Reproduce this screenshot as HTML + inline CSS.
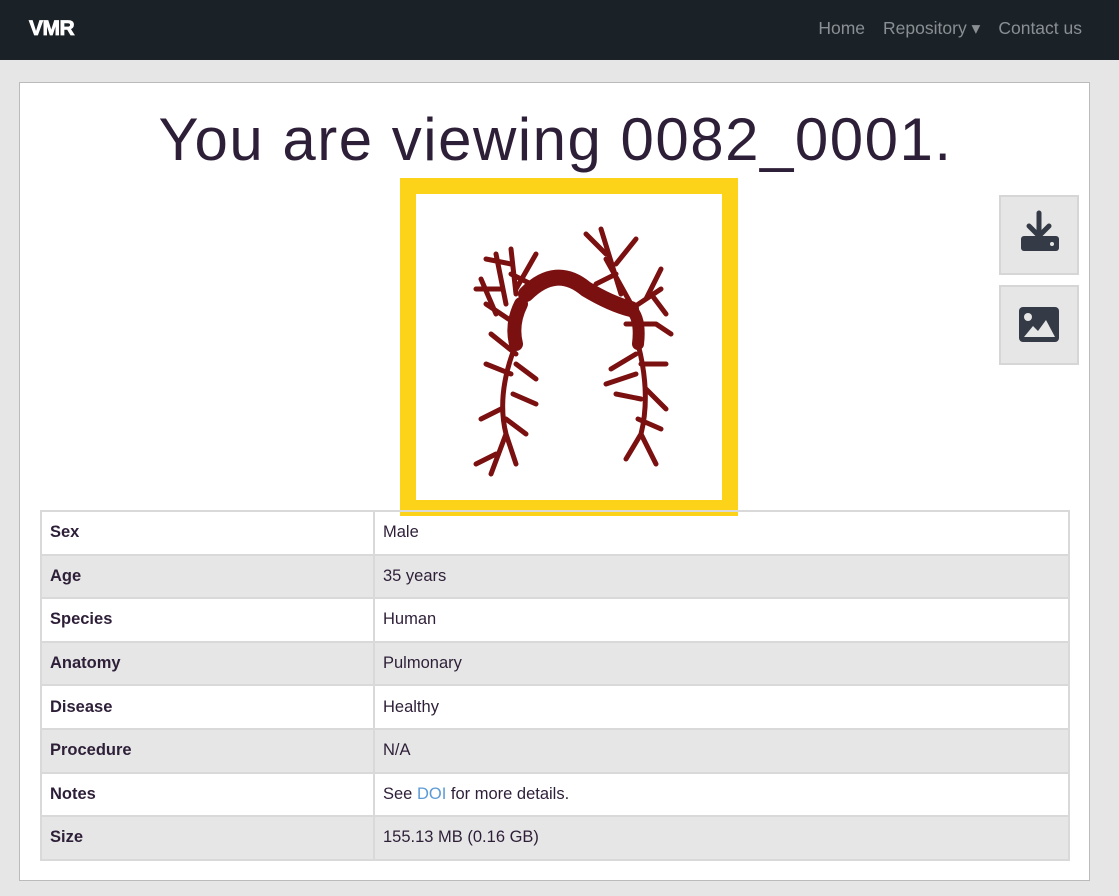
<!DOCTYPE html>
<html><head><meta charset="utf-8"><style>
*{box-sizing:border-box;margin:0;padding:0}
body{width:1119px;height:896px;background:#e6e6e6;font-family:"Liberation Sans",sans-serif;position:relative;overflow:hidden}
.nav{position:absolute;left:0;top:0;width:1119px;height:60px;background:#1a2228}
.brand{position:absolute;left:29px;top:17px;color:#fff;font-weight:900;font-size:21px;letter-spacing:-0.5px;-webkit-text-stroke:0.8px #fff}
.links{position:absolute;right:37px;top:18px;color:#8a8f93;font-size:17.5px}
.links span{margin-left:18px}
.card{position:absolute;left:19px;top:82px;width:1071px;height:799px;background:#fff;border:1px solid #bbb}
h1{position:absolute;left:0;width:1071px;top:22px;text-align:center;font-weight:normal;font-size:60px;color:#2e1f38;letter-spacing:1.5px}
.img{position:absolute;left:380px;top:95px;width:338px;height:338px;border:16px solid #fdd31a;background:#fff}
.btn{position:absolute;left:979px;width:80px;height:80px;background:#e6e6e6;border:2px solid #d6d6d6}
table{position:absolute;left:20px;top:427px;width:1030px;border-collapse:collapse;font-size:16.5px;color:#2e1f38}
td{border:2px solid #d9d9d9;height:43.6px;padding:0 8px}
td:first-child{width:333px;font-weight:bold}
tr:nth-child(even) td{background:#e6e6e6}
a{color:#5b9bd5;text-decoration:none}
</style></head><body>
<div class="nav"><div class="brand">VMR</div><div class="links"><span>Home</span><span>Repository ▾</span><span>Contact us</span></div></div>
<div class="card">
<h1>You are viewing 0082_0001.</h1>
<div class="img"><svg width="306" height="306" viewBox="0 0 306 306" fill="none" stroke="#7a1010" stroke-linecap="round">
<path d="M110 100 Q140 70 170 95 Q195 110 215 115" stroke-width="16"/>
<path d="M105 110 Q95 130 100 150" stroke-width="14"/>
<path d="M215 115 Q225 125 222 150" stroke-width="12"/>
<g stroke-width="5">
<path d="M100 150 Q80 200 90 240 L75 280 M90 240 L100 270 M95 180 L70 170 M97 200 L120 210 M85 215 L65 225 M100 160 L75 140 M100 130 L70 110 M80 120 L65 85 M90 110 L80 60 M100 100 L95 55 M100 95 L120 60 M95 70 L70 65 M95 80 L115 90 M85 95 L60 95 M100 170 L120 185 M90 225 L110 240 M80 260 L60 270"/>
<path d="M222 150 Q235 200 225 240 L240 270 M225 240 L210 265 M225 170 L250 170 M230 195 L250 215 M225 205 L200 200 M222 225 L245 235 M220 160 L195 175 M215 115 L245 95 M230 105 L245 75 M215 110 L190 65 M205 100 L185 35 M190 60 L170 40 M200 70 L220 45 M200 80 L180 90 M235 100 L250 120 M240 130 L255 140 M210 130 L240 130 M220 180 L190 190"/>
</g>
</svg></div>
<div class="btn" style="top:112px"><svg width="76" height="76" viewBox="0 0 76 76"><path d="M38 16v22M28 29l10 10 10-10" stroke="#343a46" stroke-width="5" fill="none" stroke-linecap="round" stroke-linejoin="round"/><rect x="20" y="39" width="38" height="15" rx="3" fill="#343a46"/><circle cx="51" cy="47" r="2" fill="#e6e6e6"/></svg></div>
<div class="btn" style="top:202px"><svg width="76" height="76" viewBox="0 0 76 76"><rect x="18" y="20" width="40" height="35" rx="4" fill="#343a46"/><circle cx="27" cy="30" r="4" fill="#e6e6e6"/><path d="M23 50l9-11 5 5 8-11 9 17z" fill="#e6e6e6"/></svg></div>
<table>
<tr><td>Sex</td><td>Male</td></tr>
<tr><td>Age</td><td>35 years</td></tr>
<tr><td>Species</td><td>Human</td></tr>
<tr><td>Anatomy</td><td>Pulmonary</td></tr>
<tr><td>Disease</td><td>Healthy</td></tr>
<tr><td>Procedure</td><td>N/A</td></tr>
<tr><td>Notes</td><td>See <a>DOI</a> for more details.</td></tr>
<tr><td>Size</td><td>155.13 MB (0.16 GB)</td></tr>
</table>
</div>
</body></html>
